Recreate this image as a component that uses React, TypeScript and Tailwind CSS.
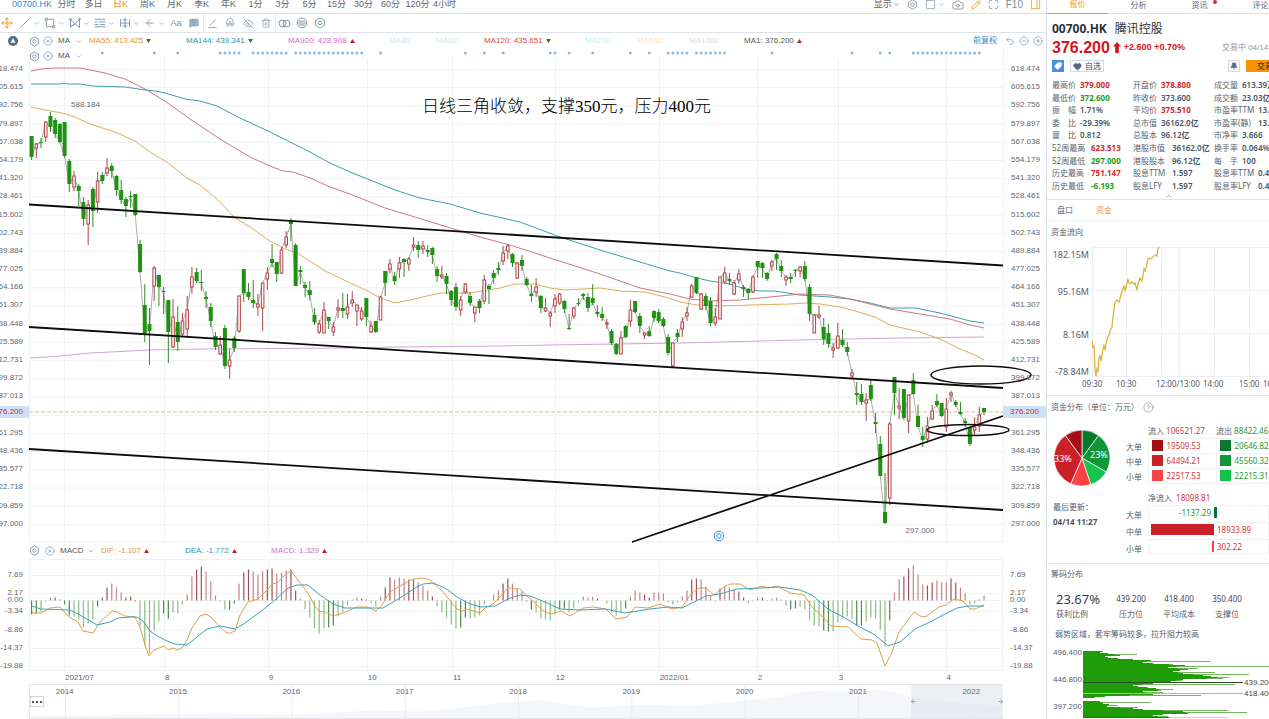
import type { ReactNode } from 'react'
import {
  ArrowLeft,
  Bell,
  Camera,
  ChevronDown,
  ChevronUp,
  CircleHelp,
  CircleMinus,
  CirclePlus,
  CircleX,
  EyeOff,
  Heart,
  Magnet,
  Maximize,
  MessageSquareText,
  Move,
  Pencil,
  Square,
  Tag,
  Trash2,
  Undo2,
} from 'lucide-react'

// high, body top, body bottom, low, 1 = up / 0 = down
const candles = [
  [136,136,157,160,0],[143,144,148,158,1],[138,142,143,148,0],[121,122,137,142,1],[112,116,127,132,0],
  [118,120,134,138,0],[123,124,142,143,0],[122,122,156,158,0],[159,161,184,192,0],[171,176,187,191,1],
  [184,186,191,206,0],[197,202,219,226,0],[200,205,224,245,1],[187,189,211,227,0],[172,181,202,213,1],
  [172,175,181,184,0],[158,168,173,176,1],[163,166,171,178,0],[175,176,190,196,0],[180,190,200,204,0],
  [197,199,206,217,0],[191,196,197,208,0],[194,194,215,216,0],[240,244,272,273,0],[284,305,333,342,0],
  [308,324,331,365,0],[266,268,286,301,1],[275,275,287,306,0],[287,291,292,314,0],[300,300,332,363,0],
  [299,317,347,348,1],[306,322,342,351,0],[313,321,334,337,1],[296,310,329,336,1],[267,277,287,294,1],
  [268,272,281,283,0],[270,282,283,291,0],[291,297,299,308,0],[303,307,321,327,0],[332,336,347,350,0],
  [336,345,354,355,1],[325,328,366,369,0],[349,360,366,379,1],[336,338,348,352,0],[296,296,331,333,1],
  [269,269,293,302,0],[283,292,297,300,0],[280,300,303,308,0],[294,304,307,316,1],[283,283,308,331,1],
  [267,273,279,290,1],[244,259,263,267,0],[262,262,274,282,0],[247,250,273,274,1],[231,237,245,248,1],
  [218,221,224,241,0],[243,245,286,286,0],[266,270,272,284,0],[282,285,288,297,0],[281,290,295,300,0],
  [308,315,322,325,0],[320,324,332,334,1],[302,310,333,333,1],[317,317,321,329,0],[322,327,332,336,1],
  [299,308,310,318,1],[293,308,311,318,0],[294,307,314,319,1],[291,300,303,307,1],[305,305,311,326,1],
  [307,311,319,321,1],[298,298,317,326,0],[321,326,332,333,1],[321,321,332,333,0],[296,297,320,320,1],
  [271,271,283,296,0],[259,264,269,273,1],[272,276,281,285,0],[257,263,269,278,1],[258,259,262,277,0],
  [257,259,264,271,1],[237,245,247,251,1],[241,245,250,258,0],[241,246,249,254,1],[245,250,252,257,0],
  [247,248,255,264,0],[266,269,276,282,0],[266,275,277,279,1],[273,276,284,294,0],[290,291,300,306,0],
  [283,287,307,311,0],[296,300,310,316,1],[283,284,292,294,1],[292,296,303,306,0],[307,307,313,322,1],
  [299,301,308,313,0],[275,280,301,304,1],[284,286,289,304,0],[270,273,278,284,0],[262,268,270,275,0],
  [246,253,261,265,1],[244,246,251,259,1],[253,254,263,267,0],[262,263,278,279,1],[255,260,266,271,0],
  [277,279,285,286,0],[285,294,296,302,0],[278,287,292,297,1],[295,296,308,313,0],[298,308,311,312,1],
  [311,313,316,327,1],[294,299,306,313,1],[293,294,303,305,1],[300,301,309,313,0],[314,328,329,330,0],
  [307,308,316,319,1],[298,303,304,306,0],[293,294,296,300,0],[293,297,308,312,0],[284,298,303,305,0],
  [305,312,314,317,0],[307,314,318,321,0],[319,323,324,329,1],[329,331,343,345,0],[343,344,354,355,0],
  [331,338,354,354,1],[325,326,337,338,0],[300,310,321,327,1],[301,301,312,313,0],[313,316,326,333,0],
  [332,333,335,339,1],[326,331,336,337,0],[310,311,318,322,0],[309,312,321,323,0],[317,319,326,327,0],
  [334,337,353,355,0],[343,343,366,367,1],[329,333,337,342,0],[317,322,329,337,1],[307,313,316,321,1],
  [284,286,297,298,1],[277,277,293,294,0],[293,294,309,310,1],[293,296,306,310,0],[297,301,323,326,0],
  [308,317,323,326,1],[277,277,319,319,1],[267,273,282,283,1],[273,279,281,285,0],[280,283,294,295,1],
  [269,274,280,284,1],[285,287,289,297,0],[288,289,293,299,0],[275,277,292,293,1],[261,261,267,278,0],
  [262,263,268,278,0],[272,273,279,281,0],[260,262,266,271,1],[253,254,259,270,0],[260,266,271,277,0],
  [275,277,280,286,1],[273,277,279,283,0],[269,270,271,277,0],[266,267,271,277,1],[261,266,279,281,0],
  [284,287,314,321,0],[314,315,333,333,1],[306,315,317,319,1],[318,327,339,345,0],[324,333,344,348,0],
  [343,348,350,358,1],[323,336,348,349,1],[329,340,345,347,0],[342,347,352,356,0],[369,373,376,378,1],
  [382,393,395,405,0],[384,394,402,405,0],[393,400,403,421,1],[380,385,399,401,0],[413,422,424,433,0],
  [436,444,476,476,0],[473,512,523,524,0],[422,424,498,505,1],[377,377,393,415,0],[388,406,408,419,1],
  [389,389,418,420,0],[394,395,421,433,1],[373,380,394,394,0],[405,416,427,427,0],[427,436,440,447,0],
  [417,426,439,443,1],[405,411,419,420,1],[394,401,405,407,0],[403,403,416,417,0],[398,409,427,432,1],
  [391,393,395,402,1],[400,402,405,407,0],[402,412,414,415,0],[418,421,423,427,0],[427,427,444,446,0],
  [417,427,430,436,1],[407,415,426,432,1],[408,408,412,415,0],
]

const macdBars = [
  -14,-13,-11,-1,3,3,1,-4,-15,-16,-19,-27,-23,-19,-6,3,13,17,13,8,3,4,-1,-25,-45,-53,-30,-21,-13,-18,-12,-13,-4,6,24,
  31,34,29,19,5,-1,-9,-9,-3,17,28,31,29,26,29,31,32,27,28,30,31,10,2,-9,-17,-28,-33,-28,-27,-25,-16,-11,-5,1,3,2,1,-3,
  -6,4,13,23,21,23,22,21,21,18,15,10,4,-6,-12,-17,-24,-28,-27,-17,-18,-17,-15,-4,0,6,10,17,22,17,12,9,-1,-9,-12,-18,
  -19,-20,-14,-9,-8,-12,-8,-2,4,3,4,2,0,-3,-12,-15,-12,-8,4,10,8,6,3,8,8,7,-2,-4,-2,4,10,21,22,21,14,5,-1,12,14,13,11,
  9,3,-3,-1,3,3,-1,2,3,1,-5,-9,-8,-6,-9,-20,-25,-26,-30,-31,-31,-22,-18,-16,-18,-25,-25,-21,-17,-18,-29,-46,-20,8,21,
  24,32,35,26,16,15,18,20,18,18,22,18,13,7,-4,-3,1,5,
]

const lines = {
  ma55: '31,107 45,110 62,113 75,117 90,124 115,132 135,141 150,152 168,163 187,178 200,185 217,199 235,218 250,227 270,241 285,249 297,253 310,261 325,271 340,278 350,283 370,292 380,298 395,303 410,300 440,293 470,293 500,288 515,284 535,284 550,288 565,290 600,288 620,291 645,292 665,297 680,302 697,305 720,306 750,305 790,304 805,303 820,304 840,307 855,311 875,317 890,325 920,332 940,339 960,349 975,355 984,360',
  ma120: '31,71 40,69 55,68 80,68 90,70 105,73 125,79 145,89 165,101 190,119 220,139 250,157 270,166 283,171 293,172 310,178 330,187 350,194 385,208 415,217 460,231 480,237 510,245 550,258 600,274 640,288 670,294 690,299 710,301 740,300 770,297 800,294 830,295 850,299 870,304 890,309 920,314 950,319 970,325 984,328',
  ma144: '31,84 60,84 64,83 67,84 80,84 92,86 125,87 145,90 155,91 165,93 185,99 200,101 217,106 240,118 270,132 290,142 310,152 330,163 350,172 370,180 395,190 420,198 450,204 480,213 520,222 560,237 600,250 640,262 670,271 680,273 697,278 710,281 730,284 745,289 760,291 775,291 800,295 830,297 850,299 870,303 890,308 915,308 940,313 970,321 984,323',
  ma900: '31,358 60,356 90,353 150,350 200,349 350,348 400,347 500,346 550,345 680,343 800,340 900,338 984,337',
  dif: '32,613 41,613 50,608 60,607 69,617 78,622 83,631 93,633 100,622 112,611 117,612 125,616 135,617 140,627 145,645 149,656 154,650 164,646 168,650 173,648 178,650 183,647 187,640 192,628 200,616 206,614 211,617 220,627 227,633 230,633 235,631 240,615 248,602 258,599 268,589 272,584 277,583 286,574 291,571 297,579 305,589 310,597 315,606 319,611 325,612 333,616 343,613 357,607 367,607 376,611 382,605 390,592 400,586 413,579 423,578 430,580 433,583 443,592 452,603 457,609 462,611 467,609 470,610 480,613 485,608 493,604 500,597 508,588 520,589 527,596 534,602 542,610 550,614 561,611 570,616 583,608 593,607 606,609 616,619 627,617 635,607 648,608 660,604 672,609 682,607 692,593 699,588 706,588 714,595 725,586 730,584 740,584 750,590 762,586 768,588 777,586 790,593 804,595 812,607 824,618 831,626 848,627 861,639 872,640 877,643 885,666 892,652 899,632 914,612 922,617 927,616 939,607 946,605 954,599 963,601 970,609 975,609 984,605',
  dea: '32,606 41,609 70,610 80,615 97,625 110,622 118,618 130,617 137,617 143,621 150,631 157,636 167,641 175,644 187,645 197,637 207,629 220,626 235,629 245,623 260,612 275,600 288,588 297,585 308,585 320,595 333,604 345,608 365,608 383,608 400,598 415,588 423,584 433,583 445,588 457,597 468,603 480,607 495,606 510,598 520,595 530,596 545,602 560,609 580,610 605,609 625,613 650,609 668,607 682,608 692,603 706,596 720,594 737,589 760,588 780,587 800,590 812,595 828,609 845,618 860,627 875,635 888,646 900,642 915,629 930,622 945,614 957,608 968,606 984,606',
}

// trading days that carry an event marker, as [from, to]
const eventDays = [
  [15, 15], [26, 26], [31, 31], [40, 44], [47, 54], [56, 70], [74, 74], [92, 92], [96, 96], [100, 100], [110, 111],
  [114, 114], [119, 119], [127, 127], [131, 131], [135, 139], [141, 147], [157, 157], [174, 174], [180, 180],
  [182, 182], [187, 201],
]

const chipRows = [
  20, 17, 25, 54, 37, 22, 25, 35, 50, 68, 127, 60, 70, 90, 102, 200, 85, 115, 105, 97, 90, 132, 100, 166, 120, 128, 146,
  140, 100, 99, 88, 87, 70, 152, 50, 55, 65, 73, 90, 78, 60, 80, 65, 70, 118, 22, 12, 0, 0, 0, 17, 68, 20, 26, 35, 24,
  55, 50, 60, 145, 100, 164, 105, 80, 70, 85,
]

const months = [
  ['2021/07', 64, 100], ['8', 164, 104], ['9', 268, 99], ['10', 367, 85], ['11', 452, 103], ['12', 555, 104],
  ['2022/01', 659, 98], ['2', 757, 81], ['3', 838, 108], ['4', 946, 57],
] as const
const years = ['2014', '2015', '2016', '2017', '2018', '2019', '2020', '2021', '2022']

const prices = [
  '618.474', '605.615', '592.756', '579.897', '567.038', '554.179', '541.320', '528.461', '515.602', '502.743',
  '489.884', '477.025', '464.166', '451.307', '438.448', '425.589', '412.731', '399.872', '387.013', '', '361.295',
  '348.436', '335.577', '322.718', '309.859', '297.000',
]

const macdTicks = [
  { label: '7.69', y: 575, size: 'h-[18px]' },
  { label: '2.17', y: 593, size: 'h-[7px]' },
  { label: '0.00', y: 600, size: 'h-[11px]' },
  { label: '-3.34', y: 611, size: 'h-[19px]' },
  { label: '-8.86', y: 630, size: 'h-[18px]' },
  { label: '-14.37', y: 648, size: 'h-[18px]' },
  { label: '-19.88', y: 666, size: 'h-[8px]' },
]

const periods = ['分时', '多日', '日K', '周K', '月K', '季K', '年K', '1分', '3分', '5分', '15分', '30分', '60分', '120分', '4小时']

const averages = [
  { text: 'MA55: 413.425', dir: 'down', className: 'w-[97px] text-[#e0952f]' },
  { text: 'MA144: 439.341', dir: 'down', className: 'w-[102px] text-[#2b97a8]' },
  { text: 'MA900: 428.908', dir: 'up', className: 'w-[101px] text-[#cf6fcf]' },
  { text: 'MA30:', className: 'w-[47px] text-[#d3dff0]' },
  { text: 'MA60:', className: 'w-[48px] text-[#cfeadf]' },
  { text: 'MA120: 435.651', dir: 'down', className: 'w-[101px] text-[#d04a4a]' },
  { text: 'MA250:', className: 'w-[52px] text-[#c8eef2]' },
  { text: 'MA500:', className: 'w-[52px] text-[#fbe5c4]' },
  { text: 'MA1000:', className: 'w-[55px] text-[#e3d3ea]' },
  { text: 'MA1: 376.200', dir: 'up', className: 'w-[80px] text-[#555]' },
]

const RED = 'text-[#d3282d]'
const GREEN = 'text-[#259b1c]'

const quotes: [string, string, string?][][] = [
  [
    ['最高价', '379.000', RED], ['最低价', '372.600', GREEN], ['振　幅', '1.71%'], ['委　比', '-29.39%'], ['量　比', '0.812'],
    ['52周最高', '623.513', RED], ['52周最低', '297.000', GREEN], ['历史最高', '751.147', RED], ['历史最低', '-6.193', GREEN],
  ],
  [
    ['开盘价', '378.800', RED], ['昨收价', '373.600'], ['平均价', '375.510', RED], ['总市值', '36162.0亿'], ['总股本', '96.12亿'],
    ['港股市值', '36162.0亿'], ['港股股本', '96.12亿'], ['股息TTM', '1.597'], ['股息LFY', '1.597'],
  ],
  [
    ['成交量', '613.39万'], ['成交额', '23.03亿'], ['市盈率TTM', '13.33'], ['市盈率(静)', '13.33'], ['市净率', '3.666'],
    ['换手率', '0.064%'], ['每　手', '100'], ['股息率TTM', '0.42%'], ['股息率LFY', '0.42%'],
  ],
]

const dayX = (i: number) => 31.6 + i * 4.715

function Svg({ size = 12, className, children }: { size?: number; className?: string; children: ReactNode }) {
  return (
    <svg width={size} height={size} viewBox="0 0 16 16" fill="none" stroke="currentColor" strokeWidth="1.2" className={className}>
      {children}
    </svg>
  )
}

function HexGear({ size = 11 }: { size?: number }) {
  return (
    <Svg size={size}>
      <path d="M8 1.2 13.8 4.6 V11.4 L8 14.8 2.2 11.4 V4.6Z" strokeLinejoin="round" />
      <circle cx="8" cy="8" r="2.5" />
    </Svg>
  )
}

function Trend({ dir }: { dir?: string }) {
  if (!dir) return null
  return (
    <svg width="5" height="4" viewBox="0 0 5 4" className={dir === 'up' ? 'text-[#b8232a]' : 'text-[#1c8a12]'}>
      <path d={dir === 'up' ? 'M0 4 2.5 0 5 4Z' : 'M0 0 2.5 4 5 0Z'} fill="currentColor" />
    </svg>
  )
}

function ToolBar() {
  const shapes = [
    <Svg><path d="M2 14 14 2" /></Svg>,
    <Svg><path d="M3 3h10v10H3z" /><path d="M1.5 1.5h3v3h-3zM11.5 11.5h3v3h-3z" fill="#fff" /></Svg>,
    <Svg><path d="M2 13V4l6 5 6-6v11L8 9Z M2 13l6-4" /><circle cx="2" cy="3" r="1.2" /><circle cx="14" cy="2.5" r="1.2" /></Svg>,
    <Svg><path d="M1 3h14M1 6.500h3M6 6.500h9M1 10h5M8 10h7M1 13h14" /></Svg>,
    <Svg><path d="M2 3v10M14 3v10M2 8h12M8 1v14M5 4h6M5 12h6" /></Svg>,
    <ArrowLeft size={12} strokeWidth={1.6} />,
  ]
  const tools = [
    <span className="text-[9px] leading-none">Aa</span>,
    <MessageSquareText size={10} fill="#a9bccf" strokeWidth={1.8} />,
    <Svg size={11}><path d="M2 14h12M4 11 13 2" /></Svg>,
    <Magnet size={10} strokeWidth={1.6} className="-rotate-45" />,
    <EyeOff size={11} strokeWidth={1.6} />,
    <Trash2 size={10} strokeWidth={1.6} />,
    <Svg size={13}><circle cx="5.500" cy="8" r="4.200" /><circle cx="10.500" cy="8" r="4.200" /></Svg>,
    <Svg size={12}><circle cx="8" cy="8" r="6.500" /><path d="M1.500 8h13M4 5.500h8M4 10.500h8" /></Svg>,
    <HexGear size={12} />,
  ]
  return (
    <div className="flex h-[19px] shrink-0 items-center border-b border-[#dfe3e8] text-[#7c8fa2]">
      <button aria-label="移动" className="flex w-[17px] pl-px text-[#ef9a1f]">
        <Move size={12} strokeWidth={2} />
      </button>
      {shapes.map((icon, i) => (
        <button key={i} className="flex w-[25px] items-center gap-[2px] pl-[2px]">
          {icon}
          <ChevronDown size={7} />
        </button>
      ))}
      {tools.map((icon, i) => (
        <button
          key={i}
          className={`flex h-[18px] w-[18px] items-center justify-center ${i === 2 || i === 6 ? 'border-l border-[#e4e7eb]' : ''}`}
        >
          {icon}
        </button>
      ))}
    </div>
  )
}

function PeriodBar() {
  return (
    <div className="flex h-[14px] shrink-0 items-start justify-between overflow-hidden border-b border-[#dfe3e8] text-[9px] leading-[9px] text-[#5c6673]">
      <div className="flex">
        <a href="#quote" className="w-[53px] pl-[12px] text-[#2f8ad0]">00700.HK</a>
        {periods.map((p) => (
          <button key={p} className={`w-[27px] whitespace-nowrap text-center ${p === '日K' ? 'font-medium text-[#ef9a1f]' : ''}`}>
            {p}
          </button>
        ))}
      </div>
      <div className="flex h-[9px] items-center gap-[7px] pr-[5px] text-[#7d8d9e]">
        <button className="flex items-center gap-px text-[#5c6673]">显示<ChevronDown size={7} /></button>
        <button aria-label="设置"><HexGear size={11} /></button>
        <button aria-label="布局" className="flex items-center gap-[2px]"><Square size={11} strokeWidth={1.6} /><ChevronDown size={7} /></button>
        <button aria-label="截图"><Camera size={12} strokeWidth={1.6} /></button>
        <button aria-label="画线" className="text-[#ef9a1f]"><Pencil size={10} /></button>
        <button aria-label="全屏"><Maximize size={11} strokeWidth={1.8} /></button>
        <button className="text-[10px]">F10</button>
        <button aria-label="侧栏" className="text-[#ef9a1f]"><Svg size={11}><path d="M2 0v14h12V0M10 0v14" /></Svg></button>
      </div>
    </div>
  )
}

function PriceAxis({ side }: { side: 'left' | 'right' }) {
  const left = side === 'left'
  return (
    <div className={`relative flex shrink-0 flex-col justify-between pb-[14px] pt-[16px] text-[8px] leading-[8px] text-[#5f6771] ${left ? 'w-[29px] items-end pr-[6px]' : 'w-[43px] items-start pl-[8px]'}`}>
      {prices.map((p, i) => (
        <span key={i} className="h-[8px]">{p}</span>
      ))}
      <span className={`absolute inset-x-0 top-[357px] flex h-[12px] items-center bg-[#cfe1f8] text-[#d3282d] ${left ? 'justify-end pr-[6px]' : 'pl-[7px]'}`}>
        376.200
      </span>
    </div>
  )
}

function CandleChart() {
  const closes = candles.map(([, top, bottom, , up], i) => `${dayX(i)},${up ? top : bottom}`).join(' ')
  return (
    <div className="relative min-w-0 flex-1">
      <svg className="absolute inset-0 h-full w-full overflow-visible" viewBox="29 49 974 493" preserveAspectRatio="none" fill="none">
        <g stroke="#f0f1f3">
          {prices.map((_, i) => <path key={i} d={`M29 ${69.5 + i * 18.2}H1003`} />)}
          {months.map(([m, x]) => <path key={m} d={`M${x + 0.5} 58V542`} />)}
          <path d="M29.500 49V542M1003.500 49V542M29 541.500H1003" />
        </g>
        <g fill="#8fbbe0">
          {eventDays.flatMap(([from, to]) =>
            Array.from({ length: to - from + 1 }, (_, k) => <circle key={from + k} cx={dayX(from + k)} cy="53" r="1.500" />),
          )}
        </g>
        <path d="M29 412H1003" stroke="#dcc08a" strokeDasharray="4 2" />
        <polyline points={lines.ma900} stroke="#d3a3d6" />
        <polyline points={lines.ma144} stroke="#3a9fae" />
        <polyline points={lines.ma120} stroke="#c97a80" />
        <polyline points={lines.ma55} stroke="#dcae5c" />
        <polyline points={closes} stroke="#777" strokeWidth="0.600" />
        {candles.map(([high, top, bottom, low, up], i) =>
          up ? (
            <g key={i} stroke="#ad4549">
              <path d={`M${dayX(i)} ${high}V${top}M${dayX(i)} ${bottom}V${low}`} />
              <rect x={dayX(i) - 1.3} y={top} width="2.600" height={bottom - top} fill="#fff4f3" />
            </g>
          ) : (
            <g key={i}>
              <path d={`M${dayX(i)} ${high}V${low}`} stroke="#358a28" />
              <rect x={dayX(i) - 2} y={top} width="4" height={Math.max(1, bottom - top)} fill="#1f9212" />
            </g>
          ),
        )}
        <g stroke="#0c0c0c" strokeWidth="1.800">
          <path d="M29 204.500 1003 265.500M29 327 1003 388M29 449 1003 510M632 542 1003 416" />
          <ellipse cx="981" cy="375" rx="50" ry="9" strokeWidth="1.500" />
          <ellipse cx="968" cy="430" rx="41" ry="5.500" strokeWidth="1.500" />
        </g>
        <g stroke="#3d93d6">
          <circle cx="719" cy="536" r="4.800" />
          <circle cx="719" cy="536" r="2.300" />
        </g>
      </svg>
      <div className="absolute left-0 top-px flex h-[12px] items-center text-[#7c8fa2]">
        <button aria-label="设置" className="w-[14px]"><HexGear /></button>
        <button aria-label="关闭" className="w-[15px]"><CircleX size={10} strokeWidth={1.6} /></button>
        <span className="w-[17px] text-[8px] text-[#4c5560]">MA</span>
        <ChevronDown size={7} />
      </div>
      <span className="absolute left-[42px] top-[52px] text-[8px] leading-[8px] text-[#5f6771]">588.184</span>
      <span className="absolute bottom-[7px] left-[90%] text-[8px] leading-[8px] text-[#5f6771]">297.000</span>
      <p className="absolute left-[393px] top-[48px] whitespace-nowrap font-['Liberation_Serif','Noto_Sans_CJK_SC',serif] text-[17px] font-light leading-[20px] text-black">
        日线三角收敛，支撑350元，压力400元
      </p>
    </div>
  )
}

function MacdAxis({ side }: { side: 'left' | 'right' }) {
  return (
    <div className={`flex shrink-0 flex-col pt-[12px] text-[8px] leading-[8px] text-[#5f6771] ${side === 'left' ? 'w-[29px] items-end pr-[6px]' : 'w-[43px] pl-[7px]'}`}>
      {macdTicks.map((t) => <span key={t.label} className={t.size}>{t.label}</span>)}
    </div>
  )
}

function MacdPanel() {
  return (
    <>
      <div className="flex h-[17px] shrink-0 items-center pl-[29px] text-[8px] text-[#7c8fa2]">
        <button aria-label="设置" className="w-[16px]"><HexGear /></button>
        <button aria-label="关闭" className="w-[15px]"><CircleX size={10} strokeWidth={1.6} /></button>
        <span className="w-[27px] text-[#4c5560]">MACD</span>
        <ChevronDown size={8} className="mr-[6px]" />
        <span className="flex w-[84px] items-center gap-[3px] text-[#e0952f]">DIF: -1.107<Trend dir="up" /></span>
        <span className="flex w-[86px] items-center gap-[3px] text-[#2b97c0]">DEA: -1.772<Trend dir="up" /></span>
        <span className="flex items-center gap-[3px] text-[#cf6fcf]">MACD: 1.329<Trend dir="up" /></span>
      </div>
      <div className="flex h-[112px] shrink-0">
        <MacdAxis side="left" />
        <svg className="h-full min-w-0 flex-1" viewBox="29 559 974 112" preserveAspectRatio="none" fill="none">
          <g stroke="#f0f1f3">
            {macdTicks.map((t) => <path key={t.y} d={`M29 ${t.y + 0.5}H1003`} />)}
            {months.map(([m, x]) => <path key={m} d={`M${x + 0.5} 559V671`} />)}
            <path d="M29.500 559V671M1002.500 559V671M29 559.500H1003M29 670.500H1003" />
          </g>
          {macdBars.map((v, i) => (
            <path
              key={i}
              d={`M${dayX(i)} 600.5V${600.5 - v}`}
              stroke={v > 0 ? (i % 5 < 2 ? '#a05058' : '#c4858a') : i % 7 < 2 ? '#4e8a48' : '#8dbd83'}
              strokeWidth="1.200"
            />
          ))}
          <polyline points={lines.dif} stroke="#dca14b" />
          <polyline points={lines.dea} stroke="#3fa2b8" />
        </svg>
        <MacdAxis side="right" />
      </div>
    </>
  )
}

function TimeAxis() {
  return (
    <div className="pl-[29px] pr-[43px] text-[8px] text-[#5f6771]">
      <div className="flex h-[13px] items-center pl-[35px]">
        {months.map(([m, , span]) => (
          <span key={m} className="basis-0 pl-px" style={{ flexGrow: span }}>{m}</span>
        ))}
      </div>
      <div className="relative h-[35px] border border-r-0 border-[#e2e6eb]">
        <svg className="absolute inset-0 h-full w-full" viewBox="29 684 974 35" preserveAspectRatio="none">
          <path
            d="M29 717 120 716 220 714 290 716 370 711 420 712 480 706 507 702 520 702 540 700 590 708 640 705 690 706 740 701 780 697 800 692 820 690 870 690 880 689 900 693 911 697 930 700 960 703 1003 706V719H29Z"
            fill="#f4f6fa"
          />
          <path d="M911 684h92v35h-92z" fill="#dfe4ea" fillOpacity="0.550" />
          <g stroke="#e8ebef">
            {years.map((y, i) => <path key={y} d={`M${64.5 + i * 113.4} 684V719`} />)}
          </g>
        </svg>
        <div className="relative -ml-[22px] -mr-[25px] flex h-[13px] items-center">
          {years.map((y) => <span key={y} className="flex-1 text-center">{y}</span>)}
        </div>
        <button aria-label="更多" className="absolute left-0 top-[11px] flex h-[11px] w-[14px] items-center justify-center border border-[#cdd5de] bg-white text-[#4c5560]">
          <svg width="10" height="2" viewBox="0 0 10 2" fill="currentColor"><path d="M0 0h2v2H0zM4 0h2v2H4zM8 0h2v2H8z" /></svg>
        </button>
        <div className="absolute right-0 top-[14px] flex w-[92px] justify-between text-[#8793a0]">
          <Svg size={5}><path d="M15 8H2M8 1 1 8l7 7" strokeWidth="2.500" /></Svg>
          <Svg size={5}><path d="M1 8h13M8 1l7 7-7 7" strokeWidth="2.500" /></Svg>
        </div>
      </div>
    </div>
  )
}

function QuoteHeader() {
  return (
    <div className="border-b border-[#dfe3e8] pl-[5px]">
      <h1 className="flex h-[21px] items-center gap-[8px] pt-[9px] text-[12px] leading-[12px] text-[#2a323c]">
        <b>00700.HK</b>
        <span>腾讯控股</span>
      </h1>
      <div className="mt-[4px] flex h-[17px] items-center whitespace-nowrap font-['Liberation_Sans','Noto_Sans_CJK_SC',sans-serif] font-bold text-[#d3141a]">
        <span className="text-[16px] leading-none">376.200</span>
        <svg width="8" height="11" viewBox="0 0 8 11" className="ml-[3px] mr-[3px] shrink-0"><path d="M4 0 8 4.500H5.800V11H2.200V4.500H0Z" fill="currentColor" /></svg>
        <span className="text-[9px]">+2.600 +0.70%</span>
        <span className="ml-[37px] text-[8px] font-normal text-[#8a939e]">交易中 04/14 11:27</span>
      </div>
      <div className="mt-[4px] flex h-[12px] items-center">
        <span className="mr-[6px] flex size-[12px] items-center justify-center bg-[#4a90e2] text-white"><Tag size={8} fill="white" className="rotate-90" /></span>
        <button className="flex h-[12px] items-center gap-[3px] border border-[#d5dae0] px-[2px] text-[8px] text-[#3f4852]">
          <Heart size={9} fill="#4e6a88" className="text-[#4e6a88]" />自选
        </button>
        <button aria-label="提醒" className="ml-auto flex size-[12px] items-center justify-center border border-[#d5dae0] text-[#58728e]"><Bell size={8} fill="currentColor" /></button>
        <button className="ml-[6px] h-[12px] w-[23px] overflow-hidden whitespace-nowrap bg-[#f7930a] pl-[11px] text-left text-[8px] font-medium leading-[12px] text-[#5b3300]">交易</button>
      </div>
      <div className="mt-[7px] flex h-[113px] text-[8px] leading-[8px]">
        {quotes.map((col, c) => (
          <dl key={c} className="grid w-[81px] shrink-0 grid-rows-9 items-center">
            {col.map(([label, value, tone], r) => (
              <div key={label} className="flex whitespace-nowrap">
                <dt className={`shrink-0 text-[#5a6470] ${label.length > 5 ? 'min-w-[44px]' : c < 2 && r > 4 ? 'w-[39px]' : 'min-w-[28px]'}`}>{label}</dt>
                <dd className={`${tone ? 'font-bold' : 'font-semibold'} ${tone ?? 'text-[#4a5462]'}`}>{value}</dd>
              </div>
            ))}
          </dl>
        ))}
      </div>
      <button aria-label="收起" className="flex h-[7px] w-full justify-center pr-[5px] text-[#76879a]"><ChevronUp size={8} className="ml-[22px]" /></button>
    </div>
  )
}

function FundFlow() {
  const ticks = [['09:30', 'w-[34px]'], ['10:30', 'w-[40px]'], ['12:00/13:00', 'w-[47px]'], ['14:00', 'w-[36px]'], ['15:00', 'w-[24px]'], ['16:00', '']]
  return (
    <section className="border-b border-[#dfe3e8] pl-[4px] text-[#56606c]">
      <h2 className="flex h-[26px] items-center pb-[4px] text-[8px]">资金流向</h2>
      <div className="flex h-[130px]">
        <div className="flex w-[41px] shrink-0 flex-col items-end pr-[3px] pt-[3px] text-[9px] leading-[9px]">
          <span className="h-[37px]">182.15M</span>
          <span className="h-[43px]">95.16M</span>
          <span className="h-[37px]">8.16M</span>
          <span>-78.84M</span>
        </div>
        <svg className="h-full min-w-0 flex-1" viewBox="1092 248 177 130" preserveAspectRatio="none" fill="none">
          <path d="M1092 248.500h177M1092 291.500h177M1092 334.500h177M1092 377.500h177M1092.500 248v130M1126.500 248v130M1161.500 248v130M1179.500 248v130M1214.500 248v130M1249.500 248v130" stroke="#eceef0" />
          <polyline
            points="1092,341 1093,349 1094,346 1095,370 1096,377 1097,370 1098,372 1099,360 1100,357 1101,362 1103,350 1104,346 1105,351 1107,340 1109,336 1110,332 1112,328 1113,318 1115,303 1117,301 1119,303 1121,296 1123,289 1124,287 1125,292 1128,280 1129,284 1131,284 1132,283 1134,285 1135,284 1137,291 1138,285 1140,279 1142,282 1143,276 1144,270 1145,272 1147,265 1148,259 1150,260 1152,259 1154,257 1156,256 1157,257 1158,250 1159,248"
            stroke="#deb23f"
            strokeWidth="1.300"
          />
        </svg>
      </div>
      <div className="flex h-[18px] pl-[31px] pt-[3px] text-[8px] leading-[8px]">
        {ticks.map(([t, w]) => <span key={t} className={`shrink-0 ${w}`}>{t}</span>)}
      </div>
    </section>
  )
}

const slices = [
  { value: 10, color: '#08792c' },
  { value: 23, color: '#0f9636' },
  { value: 11.5, color: '#14c24e' },
  { value: 11.5, color: '#fb4347' },
  { value: 33, color: '#c92127' },
  { value: 10, color: '#a50f14' },
]

function Pie() {
  const total = slices.reduce((sum, s) => sum + s.value, 0)
  let from = 0
  const at = (v: number) => {
    const a = (v / total) * Math.PI * 2
    return `${30 + 28 * Math.sin(a)} ${30 - 28 * Math.cos(a)}`
  }
  return (
    <svg width="60" height="60" viewBox="0 0 60 60">
      {slices.map((s) => {
        const d = `M30 30L${at(from)}A28 28 0 0 1 ${at(from + s.value)}Z`
        from += s.value
        return <path key={s.color} d={d} fill={s.color} stroke="#fff" strokeWidth="0.700" />
      })}
      <g fill="#fff" fontSize="9">
        <text x="38" y="30">23%</text>
        <text x="2" y="34">33%</text>
      </g>
    </svg>
  )
}

function FundSplit() {
  const rows = [
    { name: '大单', inflow: '19509.53', outflow: '20646.82', a: 'bg-[#a50f14]', b: 'bg-[#08792c]' },
    { name: '中单', inflow: '64494.21', outflow: '45560.32', a: 'bg-[#c92127]', b: 'bg-[#0f9636]' },
    { name: '小单', inflow: '22517.53', outflow: '22215.31', a: 'bg-[#fb4347]', b: 'bg-[#14c24e]' },
  ]
  return (
    <section className="border-b border-[#dfe3e8] pl-[4px] text-[8px] text-[#56606c]">
      <h2 className="flex h-[22px] items-center gap-[4px]">
        资金分布（单位：万元）
        <CircleHelp size={11} strokeWidth={1.5} className="text-[#7e90a3]" />
      </h2>
      <div className="flex h-[145px] pt-[6px]">
        <div className="w-[75px] shrink-0 pt-[4px]">
          <div className="pl-px"><Pie /></div>
          <p className="mt-[11px] pl-[2px] leading-[15px]">
            最后更新：
            <br />
            <b className="text-[#4a5462]">04/14 11:27</b>
          </p>
        </div>
        <div className="min-w-0 flex-1 whitespace-nowrap">
          <table className="w-[150px] table-fixed border-collapse text-left">
            <thead>
              <tr className="h-[14px]">
                <th className="w-[22px]" />
                <th className="w-[68px] font-normal">流入 <span className="text-[#d0383d]">106521.27</span></th>
                <th className="font-normal">流出 <span className="text-[#1f9a34]">88422.46</span></th>
              </tr>
            </thead>
            <tbody>
              {rows.map((r) => (
                <tr key={r.name} className="h-[15px]">
                  <th className="pt-[2px] font-normal">{r.name}</th>
                  <td className="border border-[#f0f1f3] py-0 text-[#d0383d]">
                    <span className="flex items-center gap-[4px] pl-[3px]"><i className={`h-[11px] w-[11px] ${r.a}`} />{r.inflow}</span>
                  </td>
                  <td className="border border-[#f0f1f3] py-0 text-[#1f9a34]">
                    <span className="flex items-center gap-[4px] pl-[3px]"><i className={`h-[11px] w-[11px] ${r.b}`} />{r.outflow}</span>
                  </td>
                </tr>
              ))}
            </tbody>
          </table>
          <p className="mt-[7px] h-[14px] pl-[22px] leading-[14px]">净流入 <span className="pl-[2px] text-[#d0383d]">18098.81</span></p>
          <dl className="grid grid-cols-[22px_1fr] leading-[15px]">
            <dt className="pt-[2px]">大单</dt>
            <dd className="flex h-[15px] items-center border border-b-0 border-[#f0f1f3] text-[#1f9a34]">
              <span className="w-[65px] pr-[3px] text-right">-1137.29</span><i className="h-[11px] w-[3px] bg-[#08792c]" />
            </dd>
            <dt className="pt-[2px]">中单</dt>
            <dd className="flex h-[15px] items-center gap-[3px] border border-b-0 border-[#f0f1f3] text-[#d0383d]">
              <i className="ml-[2px] h-[11px] w-[63px] bg-[#c92127]" />18933.89
            </dd>
            <dt className="pt-[2px]">小单</dt>
            <dd className="flex h-[15px] items-center gap-[3px] border border-[#f0f1f3] text-[#d0383d]">
              <i className="ml-[63px] h-[11px] w-[2px] bg-[#fb4347]" />302.22
            </dd>
          </dl>
        </div>
      </div>
    </section>
  )
}

// solid part of a chip row: no longer than its neighbours
const solid = (i: number) => Math.min(chipRows[i], ((chipRows[i - 1] ?? 20) + (chipRows[i + 1] ?? 80)) / 2)

function Chips() {
  const stats = [['439.200', '压力位'], ['418.400', '平均成本'], ['350.400', '支撑位']]
  return (
    <section className="flex min-h-0 flex-1 flex-col pl-[4px] text-[8px] text-[#56606c]">
      <h2 className="flex h-[20px] shrink-0 items-center">筹码分布</h2>
      <div className="mt-[6px] flex shrink-0 items-end text-center">
        <p className="w-[56px] pl-[5px] text-left leading-[13px]">
          <span className="block text-[13px] leading-[16px] text-[#333c47]">23.67%</span>
          获利比例
        </p>
        {stats.map(([value, label]) => (
          <p key={label} className="w-[48px] leading-[13px]">
            <span className="block leading-[17px] text-[#3f4852]">{value}</span>
            {label}
          </p>
        ))}
      </div>
      <p className="mt-[7px] h-[14px] shrink-0 whitespace-nowrap pl-[4px] leading-[14px]">弱势区域，套牢筹码较多，拉升阻力较高</p>
      <div className="relative mt-[7px] flex min-h-0 flex-1">
        <div className="flex w-[32px] shrink-0 flex-col gap-[18px] pl-[2px] font-['Liberation_Sans',sans-serif] leading-[9px]">
          <span>496.400</span>
          <span>446.800</span>
          <span>397.200</span>
        </div>
        <svg className="h-[70px] min-w-0 flex-1" viewBox="1083 649 186 70" preserveAspectRatio="none" fill="none">
          {chipRows.map((w, i) => (
            <g key={i}>
              <path d={`M1083 ${652.5 + i}h${w}`} stroke="#74b35f" />
              <path d={`M1083 ${652.5 + i}h${solid(i)}`} stroke="#1f9c08" />
            </g>
          ))}
          <path d="M1083 718.500h86" stroke="#9a3a10" />
          <path d="M1169 718.500h59" stroke="#e3c3c3" />
          <path d="M1083 683.500h160" stroke="#2d4a2a" />
          <path d="M1083 694.500h160" stroke="#cdbb5a" />
        </svg>
        <span className="absolute right-[-4px] top-[30px] font-['Liberation_Sans',sans-serif] leading-[9px] text-[#3f4852]">439.200</span>
        <span className="absolute right-[-4px] top-[41px] font-['Liberation_Sans',sans-serif] leading-[9px] text-[#3f4852]">418.400</span>
      </div>
    </section>
  )
}

function SidePanel() {
  return (
    <aside className="flex w-[223px] shrink-0 flex-col overflow-hidden border-l border-[#d9dee4] font-['Noto_Sans','Noto_Sans_CJK_SC',sans-serif]">
      <nav className="flex h-[14px] shrink-0 items-start border-b border-[#dfe3e8] text-[8px] leading-[8px] text-[#5c6673]">
        {['报价', '分析', '资讯', '评论'].map((t, i) => (
          <button key={t} className={`relative h-[14px] w-[61px] shrink-0 pb-[5px] ${i === 0 ? 'border-b border-[#ef9a1f] text-[#ef9a1f]' : ''}`}>
            {t}
            {t === '资讯' && <i className="absolute right-[13px] top-0 size-[4px] rounded-full bg-[#e0262c]" />}
          </button>
        ))}
      </nav>
      <QuoteHeader />
      <div className="flex h-[21px] shrink-0 items-center gap-[23px] border-b border-[#eceef1] pl-[10px] text-[8px] text-[#5c6673]">
        <button>盘口</button>
        <button className="text-[#ef9a1f]">资金</button>
      </div>
      <FundFlow />
      <FundSplit />
      <Chips />
    </aside>
  )
}

export default function App() {
  return (
    <div className="flex h-screen overflow-hidden bg-white font-['Liberation_Sans','Noto_Sans_CJK_SC',sans-serif]">
      <main className="flex min-w-0 flex-1 flex-col">
        <PeriodBar />
        <ToolBar />
        <div className="flex h-[16px] shrink-0 items-center pr-[3px] text-[8px] text-[#7c8fa2]">
          <span className="ml-[8px] flex w-[21px]">
            <svg width="10" height="10" viewBox="0 0 10 10"><circle cx="5" cy="5" r="5" fill="#4f6c8a" /><path d="M5 2 7.500 6.800H2.500Z" fill="#fff" /></svg>
          </span>
          <button aria-label="设置" className="w-[14px]"><HexGear /></button>
          <button aria-label="关闭" className="w-[15px]"><CircleX size={10} strokeWidth={1.6} /></button>
          <span className="w-[17px] text-[#4c5560]">MA</span>
          <ChevronDown size={7} className="mr-[7px]" />
          {averages.map((a) => (
            <span key={a.text} className={`flex shrink-0 items-center gap-[3px] whitespace-nowrap ${a.className}`}>
              {a.text}
              <Trend dir={a.dir} />
            </span>
          ))}
          <div className="ml-auto flex items-center gap-[4px]">
            <button className="mr-[4px] text-[#2f8ad0]">前复权</button>
            <button aria-label="撤销"><Undo2 size={10} strokeWidth={1.6} /></button>
            <button aria-label="缩小"><CircleMinus size={10} strokeWidth={1.6} /></button>
            <button aria-label="放大"><CirclePlus size={10} strokeWidth={1.6} /></button>
          </div>
        </div>
        <div className="flex min-h-0 flex-1">
          <PriceAxis side="left" />
          <CandleChart />
          <PriceAxis side="right" />
        </div>
        <MacdPanel />
        <TimeAxis />
      </main>
      <SidePanel />
    </div>
  )
}
